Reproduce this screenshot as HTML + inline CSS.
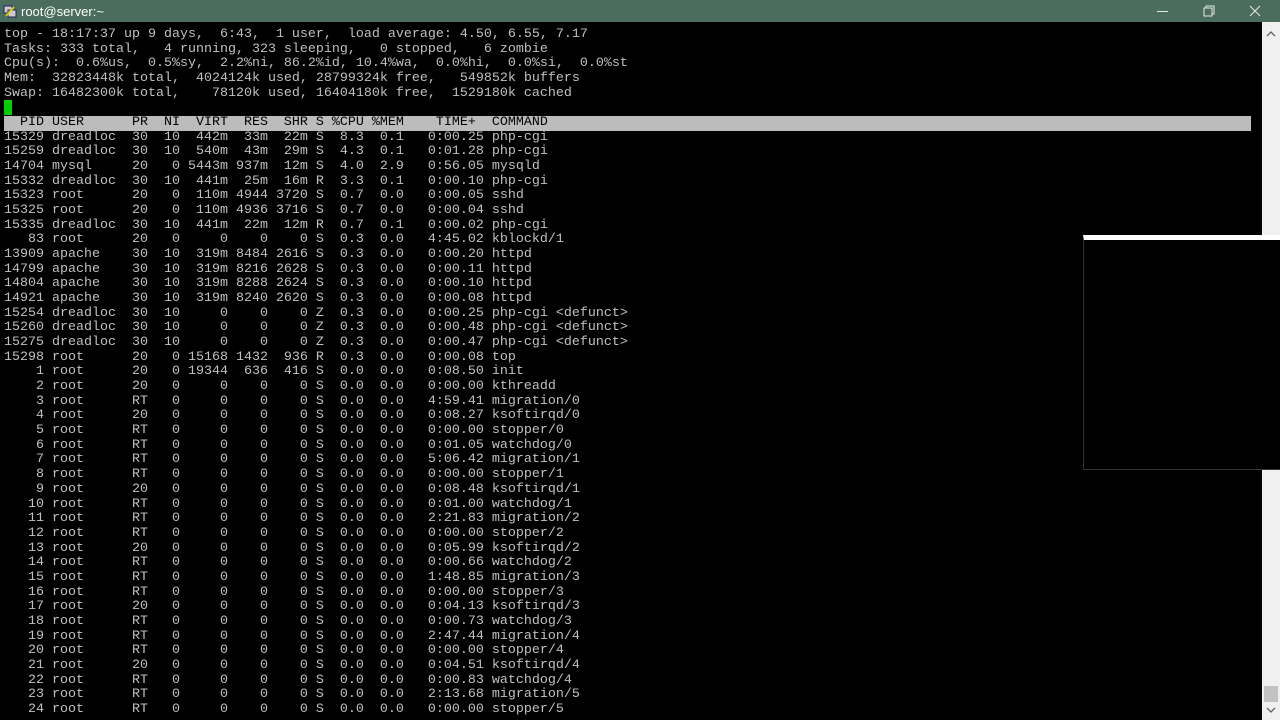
<!DOCTYPE html>
<html><head><style>
html,body{margin:0;padding:0;width:1280px;height:720px;overflow:hidden;background:#000}
#tb{position:absolute;left:0;top:0;width:1280px;height:22px;background:#4b6d5e;color:#fff;font:13px "Liberation Sans",sans-serif}
#tb .t{position:absolute;left:21px;top:4px}
pre{position:absolute;left:4px;top:28px;margin:0;font:13.33px/14.67px "Liberation Mono",monospace;color:#c0c0c0;white-space:pre}
.h{background:#bcbcbc;color:#000;display:inline-block;width:1247px}
.cur{background:#00d000;color:#00d000}
#sb{position:absolute;left:1262px;top:22px;width:18px;height:698px;background:#f0f0f0}
#pop{position:absolute;left:1083px;top:235px;width:197px;height:229px;border-top:5px solid #fff;border-left:1px solid #333;border-bottom:1px solid #333;background:#000}
</style></head><body>
<div id="tb"><svg style="position:absolute;left:3px;top:4px" width="14" height="14"><rect x="1" y="2" width="8" height="7" fill="#ccc" stroke="#226"/><rect x="5" y="6" width="8" height="7" fill="#ccc" stroke="#226"/><path d="M3 12 L11 3" stroke="#dc0" stroke-width="2"/></svg><span class="t">root@server:~</span>
<svg style="position:absolute;left:1150px;top:0" width="130" height="22" stroke="#e8e8e8" fill="none"><path d="M7 11.5H18"/><rect x="54" y="8" width="8" height="8"/><path d="M56 8V6H64V14H62"/><path d="M100 6L110 16M110 6L100 16"/></svg></div>
<pre>top - 18:17:37 up 9 days,  6:43,  1 user,  load average: 4.50, 6.55, 7.17
Tasks: 333 total,   4 running, 323 sleeping,   0 stopped,   6 zombie
Cpu(s):  0.6%us,  0.5%sy,  2.2%ni, 86.2%id, 10.4%wa,  0.0%hi,  0.0%si,  0.0%st
Mem:  32823448k total,  4024124k used, 28799324k free,   549852k buffers
Swap: 16482300k total,    78120k used, 16404180k free,  1529180k cached
<span class="cur"> </span>
<span class="h">  PID USER      PR  NI  VIRT  RES  SHR S %CPU %MEM    TIME+  COMMAND</span>
15329 dreadloc  30  10  442m  33m  22m S  8.3  0.1   0:00.25 php-cgi
15259 dreadloc  30  10  540m  43m  29m S  4.3  0.1   0:01.28 php-cgi
14704 mysql     20   0 5443m 937m  12m S  4.0  2.9   0:56.05 mysqld
15332 dreadloc  30  10  441m  25m  16m R  3.3  0.1   0:00.10 php-cgi
15323 root      20   0  110m 4944 3720 S  0.7  0.0   0:00.05 sshd
15325 root      20   0  110m 4936 3716 S  0.7  0.0   0:00.04 sshd
15335 dreadloc  30  10  441m  22m  12m R  0.7  0.1   0:00.02 php-cgi
   83 root      20   0     0    0    0 S  0.3  0.0   4:45.02 kblockd/1
13909 apache    30  10  319m 8484 2616 S  0.3  0.0   0:00.20 httpd
14799 apache    30  10  319m 8216 2628 S  0.3  0.0   0:00.11 httpd
14804 apache    30  10  319m 8288 2624 S  0.3  0.0   0:00.10 httpd
14921 apache    30  10  319m 8240 2620 S  0.3  0.0   0:00.08 httpd
15254 dreadloc  30  10     0    0    0 Z  0.3  0.0   0:00.25 php-cgi &lt;defunct&gt;
15260 dreadloc  30  10     0    0    0 Z  0.3  0.0   0:00.48 php-cgi &lt;defunct&gt;
15275 dreadloc  30  10     0    0    0 Z  0.3  0.0   0:00.47 php-cgi &lt;defunct&gt;
15298 root      20   0 15168 1432  936 R  0.3  0.0   0:00.08 top
    1 root      20   0 19344  636  416 S  0.0  0.0   0:08.50 init
    2 root      20   0     0    0    0 S  0.0  0.0   0:00.00 kthreadd
    3 root      RT   0     0    0    0 S  0.0  0.0   4:59.41 migration/0
    4 root      20   0     0    0    0 S  0.0  0.0   0:08.27 ksoftirqd/0
    5 root      RT   0     0    0    0 S  0.0  0.0   0:00.00 stopper/0
    6 root      RT   0     0    0    0 S  0.0  0.0   0:01.05 watchdog/0
    7 root      RT   0     0    0    0 S  0.0  0.0   5:06.42 migration/1
    8 root      RT   0     0    0    0 S  0.0  0.0   0:00.00 stopper/1
    9 root      20   0     0    0    0 S  0.0  0.0   0:08.48 ksoftirqd/1
   10 root      RT   0     0    0    0 S  0.0  0.0   0:01.00 watchdog/1
   11 root      RT   0     0    0    0 S  0.0  0.0   2:21.83 migration/2
   12 root      RT   0     0    0    0 S  0.0  0.0   0:00.00 stopper/2
   13 root      20   0     0    0    0 S  0.0  0.0   0:05.99 ksoftirqd/2
   14 root      RT   0     0    0    0 S  0.0  0.0   0:00.66 watchdog/2
   15 root      RT   0     0    0    0 S  0.0  0.0   1:48.85 migration/3
   16 root      RT   0     0    0    0 S  0.0  0.0   0:00.00 stopper/3
   17 root      20   0     0    0    0 S  0.0  0.0   0:04.13 ksoftirqd/3
   18 root      RT   0     0    0    0 S  0.0  0.0   0:00.73 watchdog/3
   19 root      RT   0     0    0    0 S  0.0  0.0   2:47.44 migration/4
   20 root      RT   0     0    0    0 S  0.0  0.0   0:00.00 stopper/4
   21 root      20   0     0    0    0 S  0.0  0.0   0:04.51 ksoftirqd/4
   22 root      RT   0     0    0    0 S  0.0  0.0   0:00.83 watchdog/4
   23 root      RT   0     0    0    0 S  0.0  0.0   2:13.68 migration/5
   24 root      RT   0     0    0    0 S  0.0  0.0   0:00.00 stopper/5</pre>
<div id="sb"><svg width="18" height="698" style="position:absolute;left:0;top:0" fill="none" stroke="#606060" stroke-width="1.3"><path d="M5 14L9 10L13 14"/><rect x="2" y="664" width="14" height="16" fill="#c2c2c2" stroke="none"/><path d="M5 686L9 690L13 686"/></svg></div>
<div id="pop"></div>
</body></html>
